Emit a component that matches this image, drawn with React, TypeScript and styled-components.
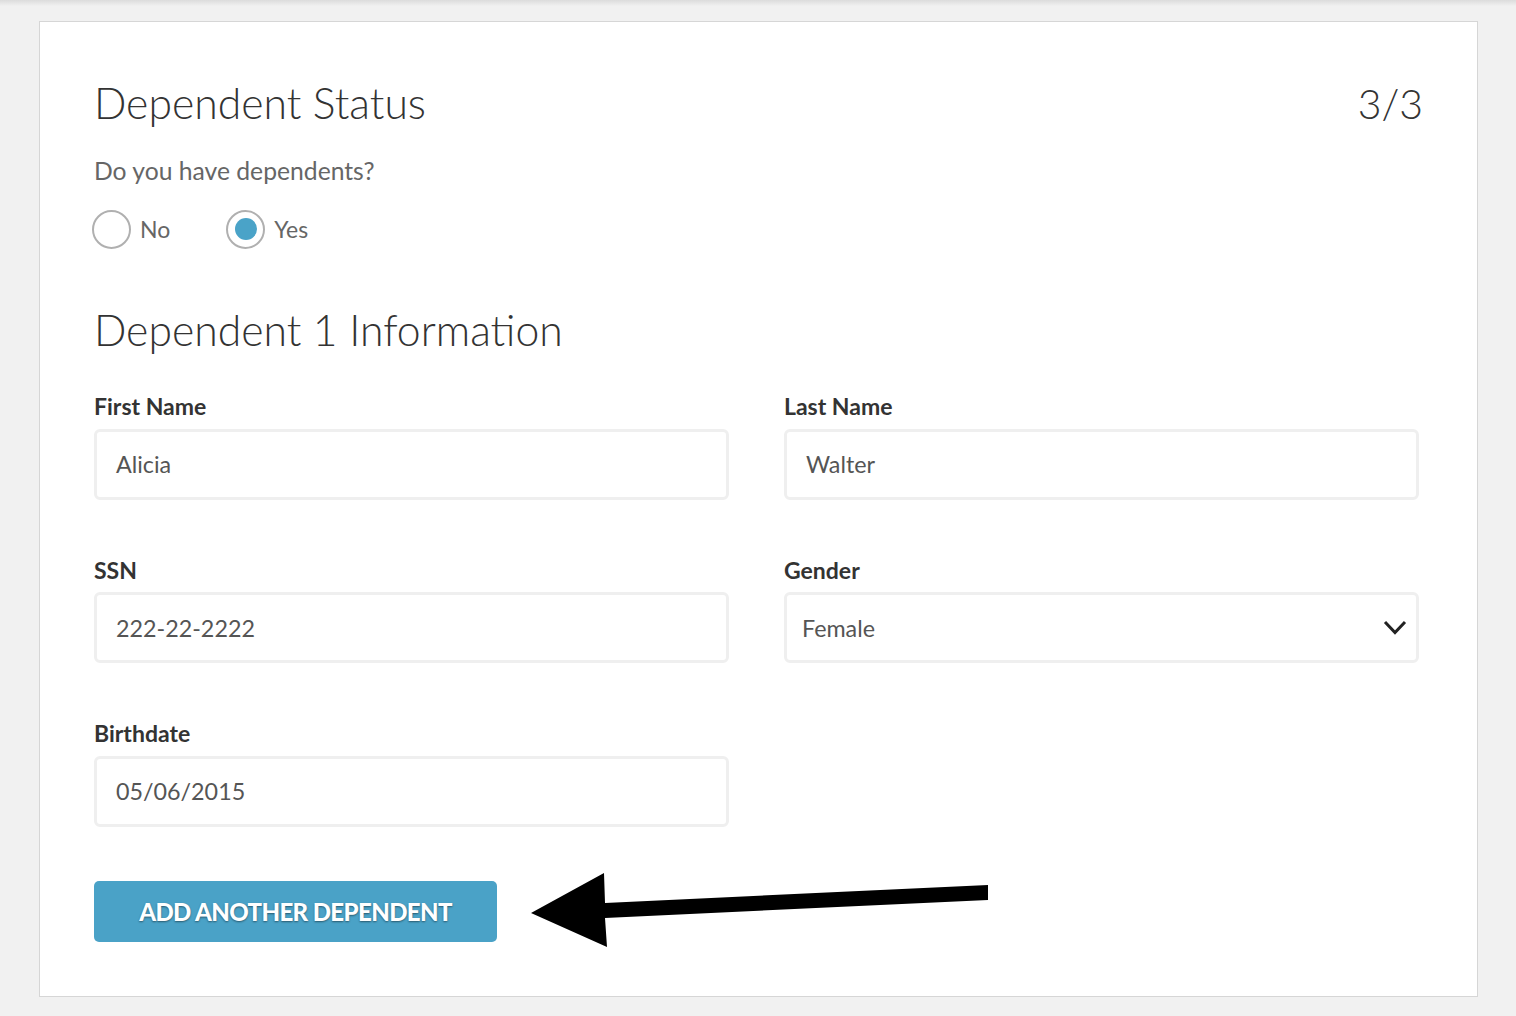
import React from 'react'
import styled, { createGlobalStyle } from 'styled-components'

const GlobalStyle = createGlobalStyle`
  html, body {
    margin: 0;
    padding: 0;
  }
  body {
    background: linear-gradient(to bottom, #dcdcdc 0, #f1f1f1 6px, #f1f1f1 100%);
    font-family: Lato, 'Liberation Sans', sans-serif;
    min-height: 1016px;
  }
`

const Page = styled.div`
  padding: 21px 38px 19px 39px;
`

const Card = styled.div`
  position: relative;
  background: #fff;
  border: 1px solid #d6d6d6;
  padding: 55px 54px 54px 54px;
`

const Header = styled.div`
  display: flex;
  justify-content: space-between;
  align-items: baseline;
`

const Title = styled.h1`
  margin: 0;
  font-weight: 300;
  font-size: 42.7px;
  line-height: 1.2;
  color: #333;
`

const Step = styled.span`
  font-weight: 300;
  font-size: 41px;
  line-height: 1.2;
  color: #333;
`

const Question = styled.p`
  margin: 28px 0 0;
  font-size: 24.7px;
  line-height: 1.2;
  color: #666;
`

const RadioGroup = styled.div`
  display: flex;
  align-items: center;
  gap: 58px;
  margin-top: 24px;
`

const RadioOption = styled.label`
  display: flex;
  align-items: center;
  gap: 9px;
  font-size: 23px;
  color: #666;
  margin-left: -2px;
`

const RadioCircle = styled.span<{ $checked?: boolean }>`
  box-sizing: border-box;
  width: 39px;
  height: 39px;
  border-radius: 50%;
  border: 2px solid #b0b0b0;
  display: flex;
  align-items: center;
  justify-content: center;

  &::after {
    content: '';
    width: 22px;
    height: 22px;
    border-radius: 50%;
    background: ${p => (p.$checked ? '#4aa3c8' : 'transparent')};
  }
`

const SectionTitle = styled.h2`
  margin: 55px 0 0;
  font-weight: 300;
  font-size: 42.7px;
  line-height: 1.2;
  color: #333;
`

const FieldGrid = styled.div`
  display: grid;
  grid-template-columns: 635px 635px;
  column-gap: 55px;
  row-gap: 57px;
  margin-top: 38px;
`

const Field = styled.div`
  display: flex;
  flex-direction: column;
  gap: 8px;
`

const Label = styled.label`
  font-size: 23px;
  font-weight: 700;
  line-height: 1.2;
  color: #333;
`

const Input = styled.div`
  box-sizing: border-box;
  height: 71px;
  border: 3px solid #efefef;
  border-radius: 6px;
  padding: 0 19px;
  display: flex;
  align-items: center;
  justify-content: space-between;
  font-size: 23.3px;
  color: #555;
`

const SelectBox = styled(Input)`
  padding: 0 9px 0 15px;
`

const AddButton = styled.button`
  margin-top: 54px;
  width: 403px;
  height: 61px;
  border: none;
  border-radius: 5px;
  background: #4aa2c7;
  color: #fff;
  font-family: Lato, 'Liberation Sans', sans-serif;
  font-size: 24px;
  font-weight: 900;
  letter-spacing: -0.6px;
  text-transform: uppercase;
  text-shadow: 0 1px 2px rgba(0, 0, 0, 0.45);
  cursor: pointer;
`

const Arrow = styled.svg`
  position: absolute;
  left: 490px;
  top: 848px;
`

const Chevron = () => (
  <svg width="24" height="16" viewBox="0 0 24 16">
    <polyline points="2,2 12,12.5 22,2" fill="none" stroke="#222" strokeWidth="3" />
  </svg>
)

export default function App() {
  return (
    <>
      <GlobalStyle />
      <Page>
        <Card>
          <Header>
            <Title>Dependent Status</Title>
            <Step>3/3</Step>
          </Header>
          <Question>Do you have dependents?</Question>
          <RadioGroup>
            <RadioOption>
              <RadioCircle />
              No
            </RadioOption>
            <RadioOption>
              <RadioCircle $checked />
              Yes
            </RadioOption>
          </RadioGroup>

          <SectionTitle>Dependent 1 Information</SectionTitle>
          <FieldGrid>
            <Field>
              <Label>First Name</Label>
              <Input>Alicia</Input>
            </Field>
            <Field>
              <Label>Last Name</Label>
              <Input>Walter</Input>
            </Field>
            <Field>
              <Label>SSN</Label>
              <Input>222-22-2222</Input>
            </Field>
            <Field>
              <Label>Gender</Label>
              <SelectBox>
                Female
                <Chevron />
              </SelectBox>
            </Field>
            <Field>
              <Label>Birthdate</Label>
              <Input>05/06/2015</Input>
            </Field>
          </FieldGrid>

          <AddButton>Add Another Dependent</AddButton>

          <Arrow width="460" height="80" viewBox="0 0 460 80">
            <polygon points="1,43 74,3 75,33 458,15 458,30 75,48 77,77" fill="#000" />
          </Arrow>
        </Card>
      </Page>
    </>
  )
}
